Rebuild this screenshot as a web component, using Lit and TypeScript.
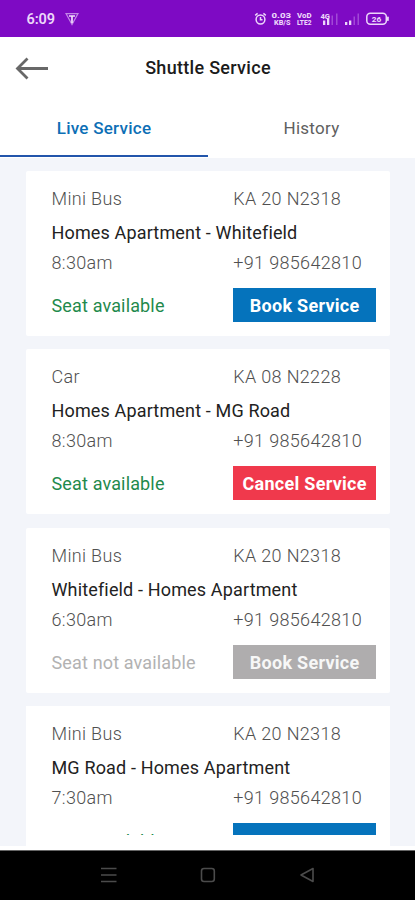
import { LitElement, html, css, svg } from "lit";
import { customElement, property } from "lit/decorators.js";
import { classMap } from "lit/directives/class-map.js";

interface Trip {
  vehicle: string;
  plate: string;
  route: string;
  time: string;
  phone: string;
  state: "open" | "booked" | "full";
}

const PHONE = "+91 985642810";
const TRIPS: Trip[] = [
  { vehicle: "Mini Bus", plate: "KA 20 N2318", route: "Homes Apartment - Whitefield", time: "8:30am", phone: PHONE, state: "open" },
  { vehicle: "Car", plate: "KA 08 N2228", route: "Homes Apartment - MG Road", time: "8:30am", phone: PHONE, state: "booked" },
  { vehicle: "Mini Bus", plate: "KA 20 N2318", route: "Whitefield - Homes Apartment", time: "6:30am", phone: PHONE, state: "full" },
  { vehicle: "Mini Bus", plate: "KA 20 N2318", route: "MG Road - Homes Apartment", time: "7:30am", phone: PHONE, state: "open" },
];

@customElement("status-bar")
class StatusBar extends LitElement {
  static styles = css`
    :host { display: flex; height: 37px; box-sizing: border-box; padding: 1px 25px 0 26.5px; align-items: center; background: #7e0ac4; color: #ecd6fa; font-family: Roboto, sans-serif; }
    .clock { font-size: 14.5px; font-weight: 600; width: 38.5px; letter-spacing: -0.1px; white-space: nowrap; }
    .icons { margin-left: auto; display: block; }
    svg { display: block; }
    text { font-family: Roboto, sans-serif; font-weight: 800; fill: #ecd6fa; }
  `;
  render() {
    return html`
      <span class="clock">6:09</span>
      <svg width="14" height="14" viewBox="0 0 14 14" fill="none" stroke="#d9b0f2" stroke-width="1.2">
        <path d="M1 1.6H13L7 12.6Z" opacity=".75" /><path d="M4 4H10M7 4V11" stroke="#f1e0fb" stroke-width="1.7" />
      </svg>
      <svg class="icons" width="136" height="20" viewBox="0 0 136 20">
        ${svg`
        <g fill="none" stroke="#ecd6fa" stroke-width="1.5">
          <circle cx="6.5" cy="10.5" r="4.4" /><path d="M6.5 8V10.8H8.5M1.2 6.3L3.6 4.4M11.8 6.3L9.4 4.4" />
        </g>
        <text x="17.5" y="9.2" font-size="8" textLength="19.5" lengthAdjust="spacingAndGlyphs">0.03</text>
        <text x="20" y="16" font-size="6.5" textLength="16.5" lengthAdjust="spacingAndGlyphs">KB/S</text>
        <text x="43" y="9" font-size="7" textLength="14.5" lengthAdjust="spacingAndGlyphs">VoD</text>
        <text x="43" y="16.2" font-size="7" textLength="14.5" lengthAdjust="spacingAndGlyphs">LTE2</text>
        <text x="66.5" y="9.5" font-size="7.5" textLength="9.5" lengthAdjust="spacingAndGlyphs">4G</text>
        <g fill="#ecd6fa"><rect x="69" y="11.5" width="2.3" height="4.5" /><rect x="73" y="10" width="2.3" height="6" />
          <rect x="91" y="13" width="2.3" height="3" /><rect x="95" y="11.5" width="2.3" height="4.5" /></g>
        <g fill="#a149d6"><rect x="77.5" y="6.5" width="1.5" height="9.5" /><rect x="82" y="4.5" width="1.5" height="11.5" />
          <rect x="99.5" y="7.5" width="1.5" height="8.5" /><rect x="103.5" y="4.5" width="1.5" height="11.5" /></g>
        <rect x="112.8" y="4.3" width="19.5" height="11" rx="3.5" fill="none" stroke="#ecd6fa" stroke-width="1.5" />
        <rect x="133" y="7.5" width="1.8" height="4.6" rx=".8" fill="#ecd6fa" />
        <text x="117.8" y="12.7" font-size="7.8" textLength="9.5" lengthAdjust="spacingAndGlyphs">26</text>`}
      </svg>`;
  }
}

@customElement("trip-card")
class TripCard extends LitElement {
  @property({ attribute: false }) trip!: Trip;
  static styles = css`
    :host { display: block; flex: none; box-sizing: border-box; height: 165px; padding: 18px 14px 0 25.5px; background: #fff; border-radius: 2px; }
    .content { display: grid; grid-template-columns: 181.8px 142.7px; grid-template-rows: 20px 44px 20px 49px; align-items: center; white-space: nowrap; font: 300 18px/20px Roboto, sans-serif; letter-spacing: 0.33px; color: #505050; }
    .route { grid-column: 1 / 3; margin: 14px 0 10px; font-weight: 400; letter-spacing: 0.15px; color: #222; }
    .seat { align-self: end; height: 34px; line-height: var(--seat-line, 36px); font-weight: 400; color: #1f8a4c; letter-spacing: 0.15px; }
    .seat.full { color: #b2b2b2; }
    button { align-self: end; height: 34px; box-sizing: border-box; border: 0; padding: var(--button-pad, 2px) 0 0; font: 700 18px/28px Roboto, sans-serif; letter-spacing: 0.28px; color: #fff; background: #0573bc; }
    button.booked { background: #f0394c; }
    button.full { background: #afadae; color: #f7f7f7; }
  `;
  render() {
    const t = this.trip;
    const cls = { [t.state]: true };
    return html`<div class="content">
      <span>${t.vehicle}</span><span>${t.plate}</span>
      <span class="route">${t.route}</span>
      <span>${t.time}</span><span>${t.phone}</span>
      <span class="seat ${classMap(cls)}">${t.state === "full" ? "Seat not available" : "Seat available"}</span>
      <button class=${classMap(cls)}>${t.state === "booked" ? "Cancel Service" : "Book Service"}</button>
    </div>`;
  }
}

@customElement("app-root")
class AppRoot extends LitElement {
  static styles = css`
    :host { display: flex; flex-direction: column; width: 415px; height: 900px; overflow: hidden; background: #fff; font-family: Roboto, sans-serif; }
    header { display: grid; grid-template-columns: 48px 1fr 47px; align-items: center; height: 62px; flex: none; }
    header svg { margin: -1px 0 0 15px; }
    h1 { margin: 0; text-align: center; font-size: 18px; line-height: 24px; font-weight: 500; letter-spacing: 0.3px; color: #1b1b1b; white-space: nowrap; }
    nav { display: grid; grid-template-columns: 208px 207px; height: 58.5px; flex: none; }
    .tab { box-sizing: border-box; padding-top: 18px; text-align: center; font-size: 17px; line-height: 22px; font-weight: 450; letter-spacing: 0.26px; color: #606060; }
    .tab.active { height: 58px; font-weight: 480; color: #0d6fb6; border-bottom: 2px solid #2255ab; }
    main { display: flex; flex-direction: column; gap: 13.5px; flex: none; height: 688.5px; box-sizing: border-box; padding: 13px 25px 0 26px; overflow: hidden; background: #f3f5fa; }
    .last { overflow: hidden; flex: none; height: 129px; background: #fff; --seat-line: 37px; --button-pad: 6px; }
    .tail { flex: none; height: 12px; margin-top: -13.5px; background: #fff; }
    footer { display: flex; margin-top: auto; height: 50px; flex: none; background: #000; border-top: 1px solid #666; box-sizing: border-box; }
    footer svg { display: block; }
  `;
  render() {
    return html`
      <status-bar></status-bar>
      <header>
        <svg width="34" height="24" viewBox="0 0 34 24" fill="none" stroke="#686868" stroke-width="2.8"><path d="M33 12.5H3M12.5 2.5L2.5 12.5L12.5 22.5" /></svg>
        <h1>Shuttle Service</h1>
      </header>
      <nav><div class="tab active">Live Service</div><div class="tab">History</div></nav>
      <main>
        ${TRIPS.slice(0, 3).map((t) => html`<trip-card .trip=${t}></trip-card>`)}
        <div class="last"><trip-card .trip=${TRIPS[3]}></trip-card></div>
        <div class="tail"></div>
      </main>
      <footer>
        <svg width="415" height="49" viewBox="0 0 415 49" fill="none" stroke="#4b4b4b" stroke-width="1.6">
          <path d="M101 17.5H116.5M101 24H116.5M101 30.5H116.5" />
          <rect x="201.5" y="17.5" width="12.8" height="13" rx="2.5" />
          <path d="M313 17.5V30.5L301 24Z" stroke-linejoin="round" />
        </svg>
      </footer>`;
  }
}
